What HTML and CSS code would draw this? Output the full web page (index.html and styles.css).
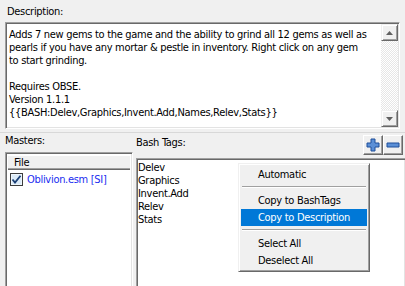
FILE: index.html
```html
<!DOCTYPE html>
<html>
<head>
<meta charset="utf-8">
<link rel="stylesheet" href="styles.css">
</head>
<body>
<div class="app">
  <div class="desc-section">
    <div class="label">Description:</div>
    <div class="textbox">
      <div class="text">Adds 7 new gems to the game and the ability to grind all 12 gems as well as
pearls if you have any mortar &amp; pestle in inventory. Right click on any gem
to start grinding.

Requires OBSE.
Version 1.1.1
{{BASH:Delev,Graphics,Invent.Add,Names,Relev,Stats}}</div>
      <div class="vscroll">
        <div class="sbtn"><svg width="7" height="4" viewBox="0 0 7 4"><path d="M3.5 0 L7 4 L0 4 Z" fill="#606060"/></svg></div>
        <div class="track"></div>
        <div class="sbtn"><svg width="7" height="4" viewBox="0 0 7 4"><path d="M0 0 L7 0 L3.5 4 Z" fill="#606060"/></svg></div>
      </div>
    </div>
  </div>
  <div class="lower">
    <div class="masters">
      <div class="label">Masters:</div>
      <div class="listbox mlist">
        <div class="colhead">File</div>
        <div class="mrow">
          <svg class="chk" width="13" height="13" viewBox="0 0 13 13">
            <rect x="0.5" y="0.5" width="12" height="12" fill="#dbeaf7" stroke="#3c3c3c"/>
            <rect x="1.5" y="1.5" width="10" height="10" fill="none" stroke="#eef6fd"/>
            <path d="M2.5 6.5 L5 9.5 L10.5 2.8" fill="none" stroke="#1b3f75" stroke-width="1.8"/>
          </svg>
          <span class="mname">Oblivion.esm [SI]</span>
        </div>
      </div>
    </div>
    <div class="sash"></div>
    <div class="tags">
      <div class="tags-head">
        <div class="label">Bash Tags:</div>
        <div class="btns">
          <div class="pbtn"><svg width="14" height="14" viewBox="0 0 14 14"><path d="M5 1 H9 V5 H13 V9 H9 V13 H5 V9 H1 V5 H5 Z" fill="#5b8fd6" stroke="#1f4f9a" stroke-width="1"/></svg></div>
          <div class="pbtn"><svg width="14" height="14" viewBox="0 0 14 14"><path d="M1 5 H13 V9 H1 Z" fill="#5b8fd6" stroke="#1f4f9a" stroke-width="1"/></svg></div>
        </div>
      </div>
      <div class="listbox tlist">
        <div class="titem">Delev</div>
        <div class="titem">Graphics</div>
        <div class="titem">Invent.Add</div>
        <div class="titem">Relev</div>
        <div class="titem">Stats</div>
      </div>
    </div>
  </div>
  <div class="menu">
    <div class="mi">Automatic</div>
    <div class="sep"></div>
    <div class="mi">Copy to BashTags</div>
    <div class="mi hl">Copy to Description</div>
    <div class="sep"></div>
    <div class="mi">Select All</div>
    <div class="mi">Deselect All</div>
  </div>
</div>
</body>
</html>
```

FILE: styles.css
```css
html, body {
  margin: 0;
  padding: 0;
}
body {
  width: 405px;
  height: 286px;
  overflow: hidden;
  background: #f0f0f0;
  font-family: "DejaVu Sans Condensed", "DejaVu Sans", sans-serif;
  font-size: 11px;
  letter-spacing: -0.3px;
  color: #000;
}
.app {
  position: relative;
  width: 405px;
  height: 286px;
  display: flex;
  flex-direction: column;
}
.label {
  line-height: 13px;
  height: 13px;
}
.desc-section {
  padding: 5px 5px 0 5px;
  display: flex;
  flex-direction: column;
  gap: 4px;
}
.desc-section .label {
  padding-left: 2px;
}
.textbox {
  height: 107px;
  box-sizing: border-box;
  border-top: 1px solid #a0a0a0;
  border-left: 1px solid #a0a0a0;
  border-right: 1px solid #ffffff;
  border-bottom: 1px solid #ffffff;
  box-shadow: inset 1px 1px 0 #696969, inset -1px -1px 0 #e3e3e3;
  background: #fff;
  display: flex;
  padding: 1px;
}
.text {
  flex: 1;
  white-space: pre;
  line-height: 13px;
  padding: 4px 0 0 2px;
}
.vscroll {
  width: 17px;
  display: flex;
  flex-direction: column;
}
.sbtn {
  height: 17px;
  box-sizing: border-box;
  background: #f0f0f0;
  border-top: 1px solid #f0f0f0;
  border-left: 1px solid #f0f0f0;
  border-right: 1px solid #696969;
  border-bottom: 1px solid #696969;
  box-shadow: inset 1px 1px 0 #fff, inset -1px -1px 0 #a0a0a0;
  display: flex;
  align-items: center;
  justify-content: center;
}
.track {
  flex: 1;
  background-color: #ffffff;
  background-image: repeating-conic-gradient(#e6e6e6 0 25%, #ffffff 0 50%);
  background-size: 2px 2px;
}
.lower {
  flex: 1;
  display: flex;
  padding: 0 0 0 5px;
  margin-top: 3px;
  border-top: 1px solid #d8d8d8;
}
.masters {
  width: 128px;
  display: flex;
  flex-direction: column;
  gap: 5px;
  padding-top: 1px;
}
.listbox {
  flex: 1;
  box-sizing: border-box;
  background: #fff;
  border-top: 1px solid #a0a0a0;
  border-left: 1px solid #a0a0a0;
  border-right: 1px solid #ffffff;
  box-shadow: inset 1px 1px 0 #696969, inset -1px 0 0 #e3e3e3;
  padding: 2px 0 0 2px;
}
.colhead {
  height: 14px;
  line-height: 14px;
  box-sizing: border-box;
  padding-left: 6px;
  background: #f0f0f0;
  border-top: 1px solid #fff;
  border-bottom: 1px solid #a0a0a0;
  margin-right: 2px;
  box-shadow: 0 1px 0 #696969;
}
.mrow {
  display: flex;
  align-items: center;
  gap: 4px;
  height: 16px;
  margin-top: 2px;
  padding-left: 2px;
}
.chk {
  display: block;
}
.mname {
  color: #1a2cf0;
}
.sash {
  width: 3px;
}
.tags {
  flex: 1;
  display: flex;
  flex-direction: column;
  padding-top: 2px;
}
.tags-head {
  height: 20px;
  display: flex;
  justify-content: space-between;
  align-items: flex-start;
  margin-bottom: 3px;
}
.tags-head .label {
  padding-top: 1px;
}
.btns {
  display: flex;
  gap: 0;
  padding-right: 2px;
}
.pbtn {
  width: 20px;
  height: 20px;
  box-sizing: border-box;
  border-top: 1px solid #fff;
  border-left: 1px solid #fff;
  border-right: 1px solid #696969;
  border-bottom: 1px solid #696969;
  box-shadow: inset -1px -1px 0 #a0a0a0;
  display: flex;
  align-items: center;
  justify-content: center;
  background: #f0f0f0;
}
.tlist {
  border-right: none;
  padding-left: 1px;
}
.titem {
  height: 13px;
  line-height: 13px;
}
.menu {
  position: absolute;
  left: 238px;
  top: 163px;
  width: 132px;
  box-sizing: border-box;
  background: #f0f0f0;
  border-top: 1px solid #f0f0f0;
  border-left: 1px solid #f0f0f0;
  border-right: 1px solid #696969;
  border-bottom: 1px solid #696969;
  box-shadow: inset 1px 1px 0 #fff, inset -1px -1px 0 #a0a0a0;
  padding: 2px;
}
.mi {
  height: 17px;
  line-height: 17px;
  padding-left: 17px;
}
.mi.hl {
  background: #0078d7;
  color: #fff;
}
.sep {
  height: 9px;
  position: relative;
}
.sep::before {
  content: "";
  position: absolute;
  left: 1px;
  right: 1px;
  top: 3px;
  border-top: 1px solid #a0a0a0;
  border-bottom: 1px solid #fff;
}
```
